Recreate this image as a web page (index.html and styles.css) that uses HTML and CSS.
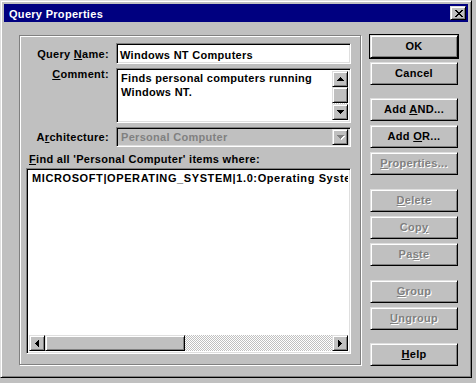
FILE: index.html
```html
<!DOCTYPE html>
<html lang="en">
<head>
    <meta charset="UTF-8">
    <title>Query Properties</title>
    <link rel="stylesheet" href="styles.css">
</head>
<body>
    <div class="window">
        <div class="titlebar">
            <span class="title">Query Properties</span>
            <span class="close">
                <svg width="8" height="7" viewBox="0 0 8 7" shape-rendering="crispEdges"><path d="M0 0h2v1H0z M6 0h2v1H6z M1 1h2v1H1z M5 1h2v1H5z M2 2h4v1H2z M3 3h2v1H3z M2 4h4v1H2z M1 5h2v1H1z M5 5h2v1H5z M0 6h2v1H0z M6 6h2v1H6z" fill="#000"/></svg>
            </span>
        </div>
        <div class="content">
            <div class="group">
                <div class="row row-name">
                    <label class="label">Query <u>N</u>ame:</label>
                    <div class="edit name-edit">Windows NT Computers</div>
                </div>
                <div class="row row-comment">
                    <label class="label"><u>C</u>omment:</label>
                    <div class="edit memo">
                        <div class="memo-text">Finds personal computers running Windows NT.</div>
                        <div class="vscroll">
                            <span class="sbtn"><svg width="7" height="4" viewBox="0 0 7 4" shape-rendering="crispEdges"><path d="M3 0h1v1H3z M2 1h3v1H2z M1 2h5v1H1z M0 3h7v1H0z"/></svg></span>
                            <span class="sbtn thumb"></span>
                            <span class="track"></span>
                            <span class="sbtn"><svg width="7" height="4" viewBox="0 0 7 4" shape-rendering="crispEdges"><path d="M0 0h7v1H0z M1 1h5v1H1z M2 2h3v1H2z M3 3h1v1H3z"/></svg></span>
                        </div>
                    </div>
                </div>
                <div class="row row-arch">
                    <label class="label">A<u>r</u>chitecture:</label>
                    <div class="edit combo">
                        <span class="combo-text">Personal Computer</span>
                        <span class="sbtn drop"><svg width="8" height="5" viewBox="0 0 8 5" shape-rendering="crispEdges"><path d="M1 1h7v1H1z M2 2h5v1H2z M3 3h3v1H3z M4 4h1v1H4z" fill="#fff"/><path d="M0 0h7v1H0z M1 1h5v1H1z M2 2h3v1H2z M3 3h1v1H3z" fill="#808080"/></svg></span>
                    </div>
                </div>
                <div class="find-label"><u>F</u>ind all 'Personal Computer' items where:</div>
                <div class="edit listbox">
                    <div class="list-items">
                        <div class="item">MICROSOFT|OPERATING_SYSTEM|1.0:Operating System</div>
                    </div>
                    <div class="hscroll">
                        <span class="sbtn"><svg width="4" height="7" viewBox="0 0 4 7" shape-rendering="crispEdges"><path d="M3 0h1v7H3z M2 1h1v5H2z M1 2h1v3H1z M0 3h1v1H0z"/></svg></span>
                        <span class="sbtn hthumb"></span>
                        <span class="track"></span>
                        <span class="sbtn"><svg width="4" height="7" viewBox="0 0 4 7" shape-rendering="crispEdges"><path d="M0 0h1v7H0z M1 1h1v5H1z M2 2h1v3H2z M3 3h1v1H3z"/></svg></span>
                    </div>
                </div>
            </div>
            <div class="buttons">
                <div class="btn default"><span>OK</span></div>
                <div class="btn"><span>Cancel</span></div>
                <div class="btn sep"><span>Add <u>A</u>ND...</span></div>
                <div class="btn"><span>Add <u>O</u>R...</span></div>
                <div class="btn disabled"><span><u>P</u>roperties...</span></div>
                <div class="btn disabled sep-wide"><span><u>D</u>elete</span></div>
                <div class="btn disabled"><span>Cop<u>y</u></span></div>
                <div class="btn disabled"><span>Pa<u>s</u>te</span></div>
                <div class="btn disabled sep-wide"><span><u>G</u>roup</span></div>
                <div class="btn disabled"><span><u>U</u>ngroup</span></div>
                <div class="btn sep"><span><u>H</u>elp</span></div>
            </div>
        </div>
    </div>
</body>
</html>
```

FILE: styles.css
```css
body {
    margin: 0;
    background: #c0c0c0;
    font-family: "Liberation Sans", Arial, sans-serif;
    font-size: 11px;
    font-weight: bold;
    letter-spacing: 0.3px;
    color: #000;
}
.window {
    box-sizing: border-box;
    width: 472px;
    height: 378px;
    border: 1px solid;
    border-color: #dfdfdf #000 #000 #dfdfdf;
    box-shadow: inset 1px 1px #fff, inset -1px -1px #808080;
    padding: 3px;
}
.titlebar {
    height: 18px;
    background: #000080;
    color: #fff;
    display: flex;
    align-items: center;
    justify-content: space-between;
    padding: 0 2px 0 5px;
}
.title {
    line-height: 13px;
    padding-top: 2px;
}
.close {
    box-sizing: border-box;
    width: 16px;
    height: 14px;
    display: flex;
    align-items: center;
    justify-content: center;
    padding-left: 1px;
}
.close, .sbtn, .btn {
    background: #c0c0c0;
    border: 1px solid;
    border-color: #dfdfdf #000 #000 #dfdfdf;
    box-shadow: inset 1px 1px #fff, inset -1px -1px #808080;
}
.content {
    display: flex;
    padding: 13px 0 0 15px;
}
.group {
    box-sizing: border-box;
    width: 342px;
    height: 330px;
    border: 1px solid #808080;
    box-shadow: 1px 1px 0 #fff, inset 1px 1px 0 #fff;
    padding: 7px 0 0 0;
    display: flex;
    flex-direction: column;
}
.row {
    display: grid;
    grid-template-columns: 89px 235px;
    column-gap: 7px;
}
.label {
    text-align: right;
    line-height: 13px;
}
.edit {
    box-sizing: border-box;
    border: 1px solid;
    border-color: #808080 #fff #fff #808080;
    box-shadow: inset 1px 1px #000, inset -1px -1px #dfdfdf;
    background: #fff;
    padding: 2px;
}
.row-name .label {
    line-height: 20px;
    padding-top: 1px;
}
.name-edit {
    height: 21px;
    line-height: 16px;
    padding: 3px 2px 0 3px;
}
.row-comment {
    margin-top: 4px;
}
.memo {
    height: 55px;
    display: flex;
}
.memo-text {
    flex: 1;
    line-height: 14px;
    padding-left: 2px;
}
.vscroll {
    width: 16px;
    display: flex;
    flex-direction: column;
}
.sbtn {
    box-sizing: border-box;
    width: 16px;
    height: 16px;
    display: flex;
    align-items: center;
    justify-content: center;
}
.track {
    flex: 1;
    background: repeating-conic-gradient(#fff 0 25%, #c0c0c0 0 50%) 0 0 / 2px 2px;
}
.row-arch {
    margin-top: 4px;
}
.row-arch .label {
    line-height: 20px;
}
.combo {
    height: 20px;
    display: flex;
    align-items: center;
    background: #c0c0c0;
    padding: 2px;
}
.combo-text {
    flex: 1;
    color: #808080;
    padding-left: 2px;
    line-height: 16px;
}
.drop svg {
    margin: 1px 0 0 1px;
}
.find-label {
    margin: 6px 0 2px 9px;
    line-height: 13px;
}
.listbox {
    margin-left: 6px;
    width: 325px;
    height: 186px;
    display: flex;
    flex-direction: column;
}
.list-items {
    flex: 1;
    overflow: hidden;
    padding: 1px 0 0 3px;
}
.item {
    white-space: nowrap;
    line-height: 13px;
    letter-spacing: 0.6px;
}
.hscroll {
    height: 16px;
    display: flex;
}
.hthumb {
    width: 140px;
}
.buttons {
    display: flex;
    flex-direction: column;
    gap: 4px;
    margin-left: 9px;
    width: 88px;
}
.btn {
    box-sizing: border-box;
    height: 23px;
    display: flex;
    align-items: center;
    justify-content: center;
    line-height: 13px;
}
.btn.default {
    outline: 1px solid #000;
}
.btn.sep {
    margin-top: 9px;
}
.btn.sep-wide {
    margin-top: 10px;
}
.btn.disabled {
    color: #808080;
    text-shadow: 1px 1px 0 #fff;
}
```
